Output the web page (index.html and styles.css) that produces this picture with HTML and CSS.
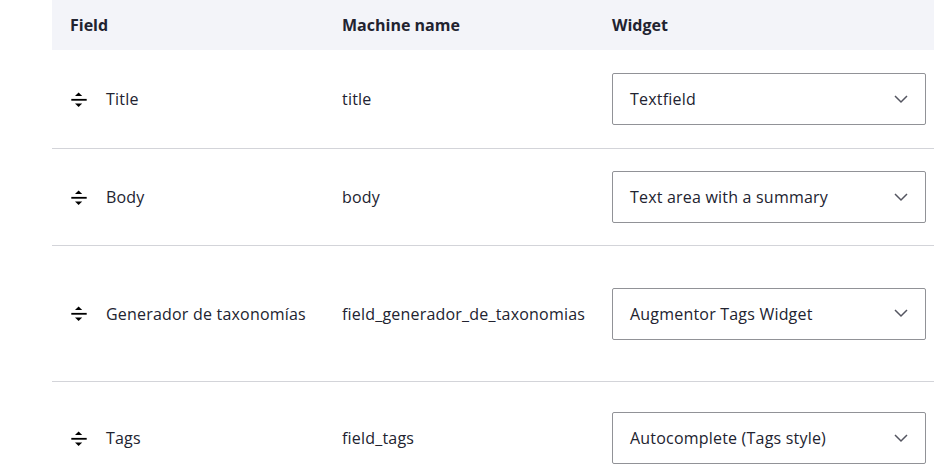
FILE: index.html
```html
<!DOCTYPE html>
<html lang="en">
<head>
<meta charset="utf-8">
<title>Manage form display</title>
<link rel="stylesheet" href="styles.css">
</head>
<body>
<div class="page">
  <div class="fields">
    <div class="row head">
      <div class="cell first">Field</div>
      <div class="cell">Machine name</div>
      <div class="cell">Widget</div>
      <div class="cell"></div>
    </div>

    <div class="row r1">
      <div class="cell first">
        <span class="handle"><svg width="17" height="17" viewBox="0 0 17 17"><path d="M8.6 1.4 L12.2 5 L5 5 Z" fill="#000"/><rect x="1.3" y="7.9" width="15.4" height="1.8" fill="#000"/><path d="M5 12.4 L12.2 12.4 L8.6 16 Z" fill="#000"/></svg></span>
        <span class="label">Title</span>
      </div>
      <div class="cell">title</div>
      <div class="cell">
        <div class="select"><span>Textfield</span><svg class="chev" width="14" height="9" viewBox="0 0 14 9"><path d="M1 1 L7 7 L13 1" fill="none" stroke="#545560" stroke-width="1.5"/></svg></div>
      </div>
      <div class="cell"></div>
    </div>

    <div class="row r2">
      <div class="cell first">
        <span class="handle"><svg width="17" height="17" viewBox="0 0 17 17"><path d="M8.6 1.4 L12.2 5 L5 5 Z" fill="#000"/><rect x="1.3" y="7.9" width="15.4" height="1.8" fill="#000"/><path d="M5 12.4 L12.2 12.4 L8.6 16 Z" fill="#000"/></svg></span>
        <span class="label">Body</span>
      </div>
      <div class="cell">body</div>
      <div class="cell">
        <div class="select"><span>Text area with a summary</span><svg class="chev" width="14" height="9" viewBox="0 0 14 9"><path d="M1 1 L7 7 L13 1" fill="none" stroke="#545560" stroke-width="1.5"/></svg></div>
      </div>
      <div class="cell"></div>
    </div>

    <div class="row r3">
      <div class="cell first">
        <span class="handle"><svg width="17" height="17" viewBox="0 0 17 17"><path d="M8.6 1.4 L12.2 5 L5 5 Z" fill="#000"/><rect x="1.3" y="7.9" width="15.4" height="1.8" fill="#000"/><path d="M5 12.4 L12.2 12.4 L8.6 16 Z" fill="#000"/></svg></span>
        <span class="label">Generador de taxonomías</span>
      </div>
      <div class="cell">field_generador_de_taxonomias</div>
      <div class="cell">
        <div class="select"><span>Augmentor Tags Widget</span><svg class="chev" width="14" height="9" viewBox="0 0 14 9"><path d="M1 1 L7 7 L13 1" fill="none" stroke="#545560" stroke-width="1.5"/></svg></div>
      </div>
      <div class="cell"></div>
    </div>

    <div class="row r4">
      <div class="cell first">
        <span class="handle"><svg width="17" height="17" viewBox="0 0 17 17"><path d="M8.6 1.4 L12.2 5 L5 5 Z" fill="#000"/><rect x="1.3" y="7.9" width="15.4" height="1.8" fill="#000"/><path d="M5 12.4 L12.2 12.4 L8.6 16 Z" fill="#000"/></svg></span>
        <span class="label">Tags</span>
      </div>
      <div class="cell">field_tags</div>
      <div class="cell">
        <div class="select"><span>Autocomplete (Tags style)</span><svg class="chev" width="14" height="9" viewBox="0 0 14 9"><path d="M1 1 L7 7 L13 1" fill="none" stroke="#545560" stroke-width="1.5"/></svg></div>
      </div>
      <div class="cell"></div>
    </div>
  </div>
</div>
</body>
</html>
```
FILE: styles.css
```css
html, body {
  margin: 0;
  padding: 0;
  background: #fff;
  overflow: hidden;
}
body {
  font-family: "Open Sans", "Noto Sans", sans-serif;
  font-size: 16px;
  letter-spacing: 0.2px;
  color: #222330;
  width: 934px;
  height: 476px;
}
.page {
  padding-left: 52px;
  overflow: hidden;
}
.fields {
  width: 1200px;
}
.row {
  display: grid;
  grid-template-columns: 274px 270px 346px 1fr;
  align-items: center;
  box-sizing: border-box;
  border-bottom: 1px solid #d3d4d9;
}
.cell {
  padding: 0 16px;
  display: flex;
  align-items: center;
  white-space: nowrap;
}
.cell.first {
  padding-left: 18px;
}
.head {
  height: 50px;
  background: #f3f4f9;
  border-bottom: none;
  font-weight: 700;
  letter-spacing: 0;
}
.r1 { height: 99px; }
.r2 { height: 97px; }
.r3 { height: 136px; }
.r4 { height: 113px; }
.handle {
  display: inline-flex;
  width: 17px;
  height: 17px;
  margin-right: 19px;
}
.select {
  box-sizing: border-box;
  width: 314px;
  height: 52px;
  border: 1px solid #919297;
  border-radius: 2px;
  padding: 0 17px;
  display: flex;
  align-items: center;
  justify-content: space-between;
  background: #fff;
}
```
